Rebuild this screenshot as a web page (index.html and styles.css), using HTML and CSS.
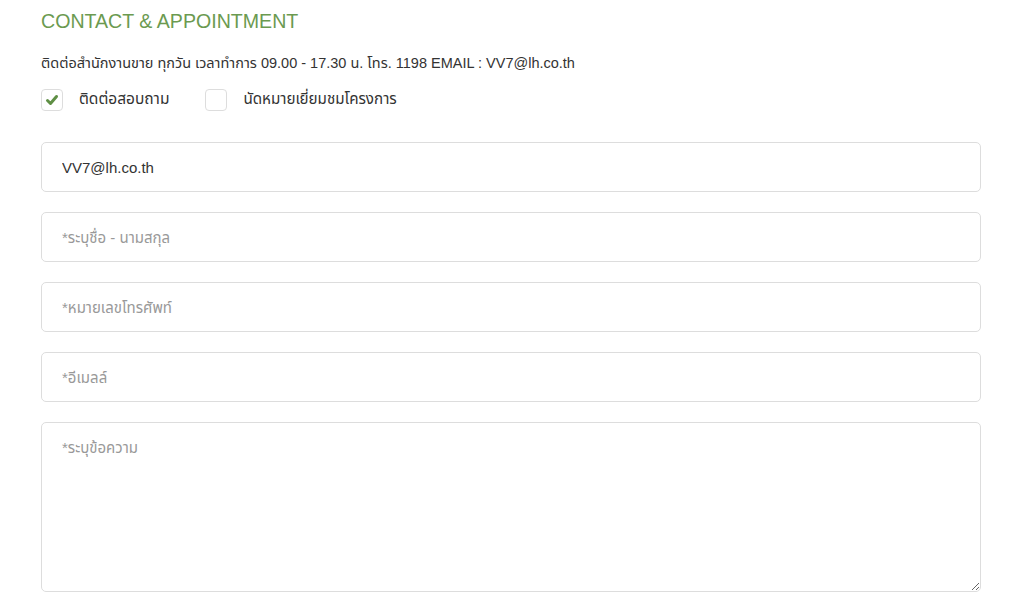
FILE: index.html
```html
<!DOCTYPE html>
<html>
<head>
  <title>Contact &amp; Appointment</title>
  <link rel="stylesheet" href="styles.css">
</head>
<body>
  <div class="contact">
    <h2>CONTACT &amp; APPOINTMENT</h2>
    <p class="info">ติดต่อสำนักงานขาย ทุกวัน เวลาทำการ 09.00 - 17.30 น. โทร. 1198 EMAIL : VV7@lh.co.th</p>

    <div class="options">
      <label class="option">
        <span class="box checked">
          <svg width="14" height="12" viewBox="0 0 14 12"><path d="M2.5 6.5 L5.5 9.5 L11.5 2.5" fill="none" stroke="#5f8f45" stroke-width="3" stroke-linecap="round" stroke-linejoin="round"/></svg>
        </span>
        ติดต่อสอบถาม
      </label>
      <label class="option second">
        <span class="box"></span>
        นัดหมายเยี่ยมชมโครงการ
      </label>
    </div>

    <form class="form">
      <input class="field" type="text" value="VV7@lh.co.th">
      <input class="field" type="text" placeholder="*ระบุชื่อ - นามสกุล">
      <input class="field" type="text" placeholder="*หมายเลขโทรศัพท์">
      <input class="field" type="text" placeholder="*อีเมลล์">
      <textarea class="field message" placeholder="*ระบุข้อความ"></textarea>
    </form>
  </div>
</body>
</html>
```

FILE: styles.css
```css
body {
  margin: 0;
  font-family: 'Liberation Sans', 'Noto Sans Thai', 'Noto Sans', sans-serif;
  color: #333;
  background: #fff;
}

.contact {
  padding: 8px 31px 0 41px;
}

h2 {
  margin: 0 0 19px;
  font-size: 19.6px;
  font-weight: normal;
  color: #6b9a50;
  line-height: 26px;
}

.info {
  margin: 0 0 15px;
  font-size: 14.5px;
  line-height: 20px;
  color: #333;
}

.options {
  display: flex;
  gap: 36px;
  margin-bottom: 31px;
}

.option {
  display: flex;
  align-items: center;
  gap: 16px;
  font-size: 15.5px;
  color: #333;
}

.option.second {
  font-size: 15.2px;
}

.box {
  width: 20px;
  height: 20px;
  border: 1px solid #ddd;
  border-radius: 4px;
  display: flex;
  align-items: center;
  justify-content: center;
}

.form {
  display: flex;
  flex-direction: column;
  gap: 20px;
}

.field {
  box-sizing: border-box;
  width: 100%;
  height: 50px;
  margin: 0;
  padding: 0 20px;
  border: 1px solid #ddd;
  border-radius: 5px;
  font-family: inherit;
  font-size: 15px;
  color: #333;
  outline: none;
}

.field::placeholder {
  color: #999;
}

.message {
  height: 170px;
  padding: 14px 20px;
  resize: vertical;
  display: block;
}
```
